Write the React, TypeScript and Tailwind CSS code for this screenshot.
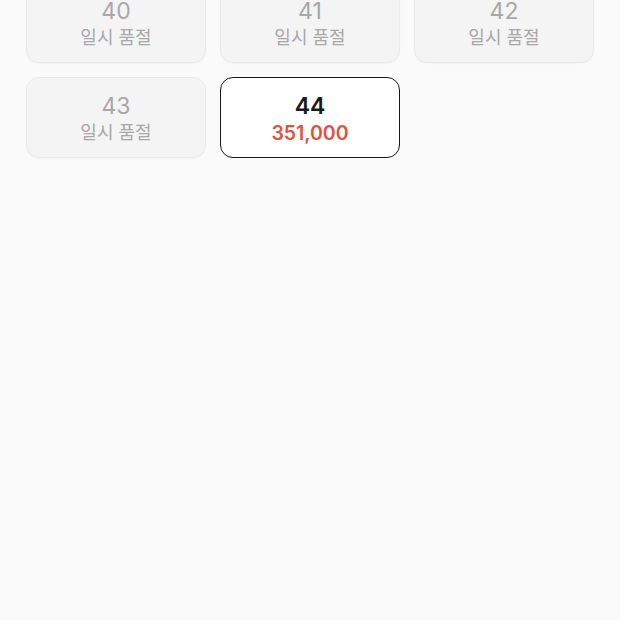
type Seat = { no: number; price?: number };

const seats: Seat[] = [
  { no: 40 },
  { no: 41 },
  { no: 42 },
  { no: 43 },
  { no: 44, price: 351000 },
];

function SeatCard({ seat, selected }: { seat: Seat; selected: boolean }) {
  const soldOut = seat.price == null;

  if (soldOut) {
    return (
      <div className="flex h-[81px] flex-col items-center justify-center rounded-[13px] border border-[#eaeaea] bg-[#f4f4f4] pt-[2px] text-[#a8a8a8] shadow-[0_1px_2px_rgba(0,0,0,0.03)]">
        <div className="text-[23px] leading-[28px]">{seat.no}</div>
        <div className="text-[18px] leading-[26px]">일시 품절</div>
      </div>
    );
  }

  return (
    <div
      className={`flex h-[81px] flex-col items-center justify-center rounded-[13px] bg-white pt-[2px] ${
        selected ? "border-[1.5px] border-[#161616]" : "border border-[#eaeaea]"
      }`}
    >
      <div className="text-[23px] leading-[28px] font-semibold text-[#1a1a1a]">{seat.no}</div>
      <div className="text-[19.5px] leading-[26px] font-semibold text-[#e0533f]">
        {seat.price!.toLocaleString()}
      </div>
    </div>
  );
}

export default function App() {
  return (
    <div
      className="h-[620px] overflow-hidden bg-[#fafafa]"
      style={{ fontFamily: 'Inter, "Noto Sans CJK KR", sans-serif' }}
    >
      <div className="-mt-[18px] grid grid-cols-3 gap-[14px] px-[26px]">
        {seats.map((s) => (
          <SeatCard key={s.no} seat={s} selected={s.no === 44} />
        ))}
      </div>
    </div>
  );
}
